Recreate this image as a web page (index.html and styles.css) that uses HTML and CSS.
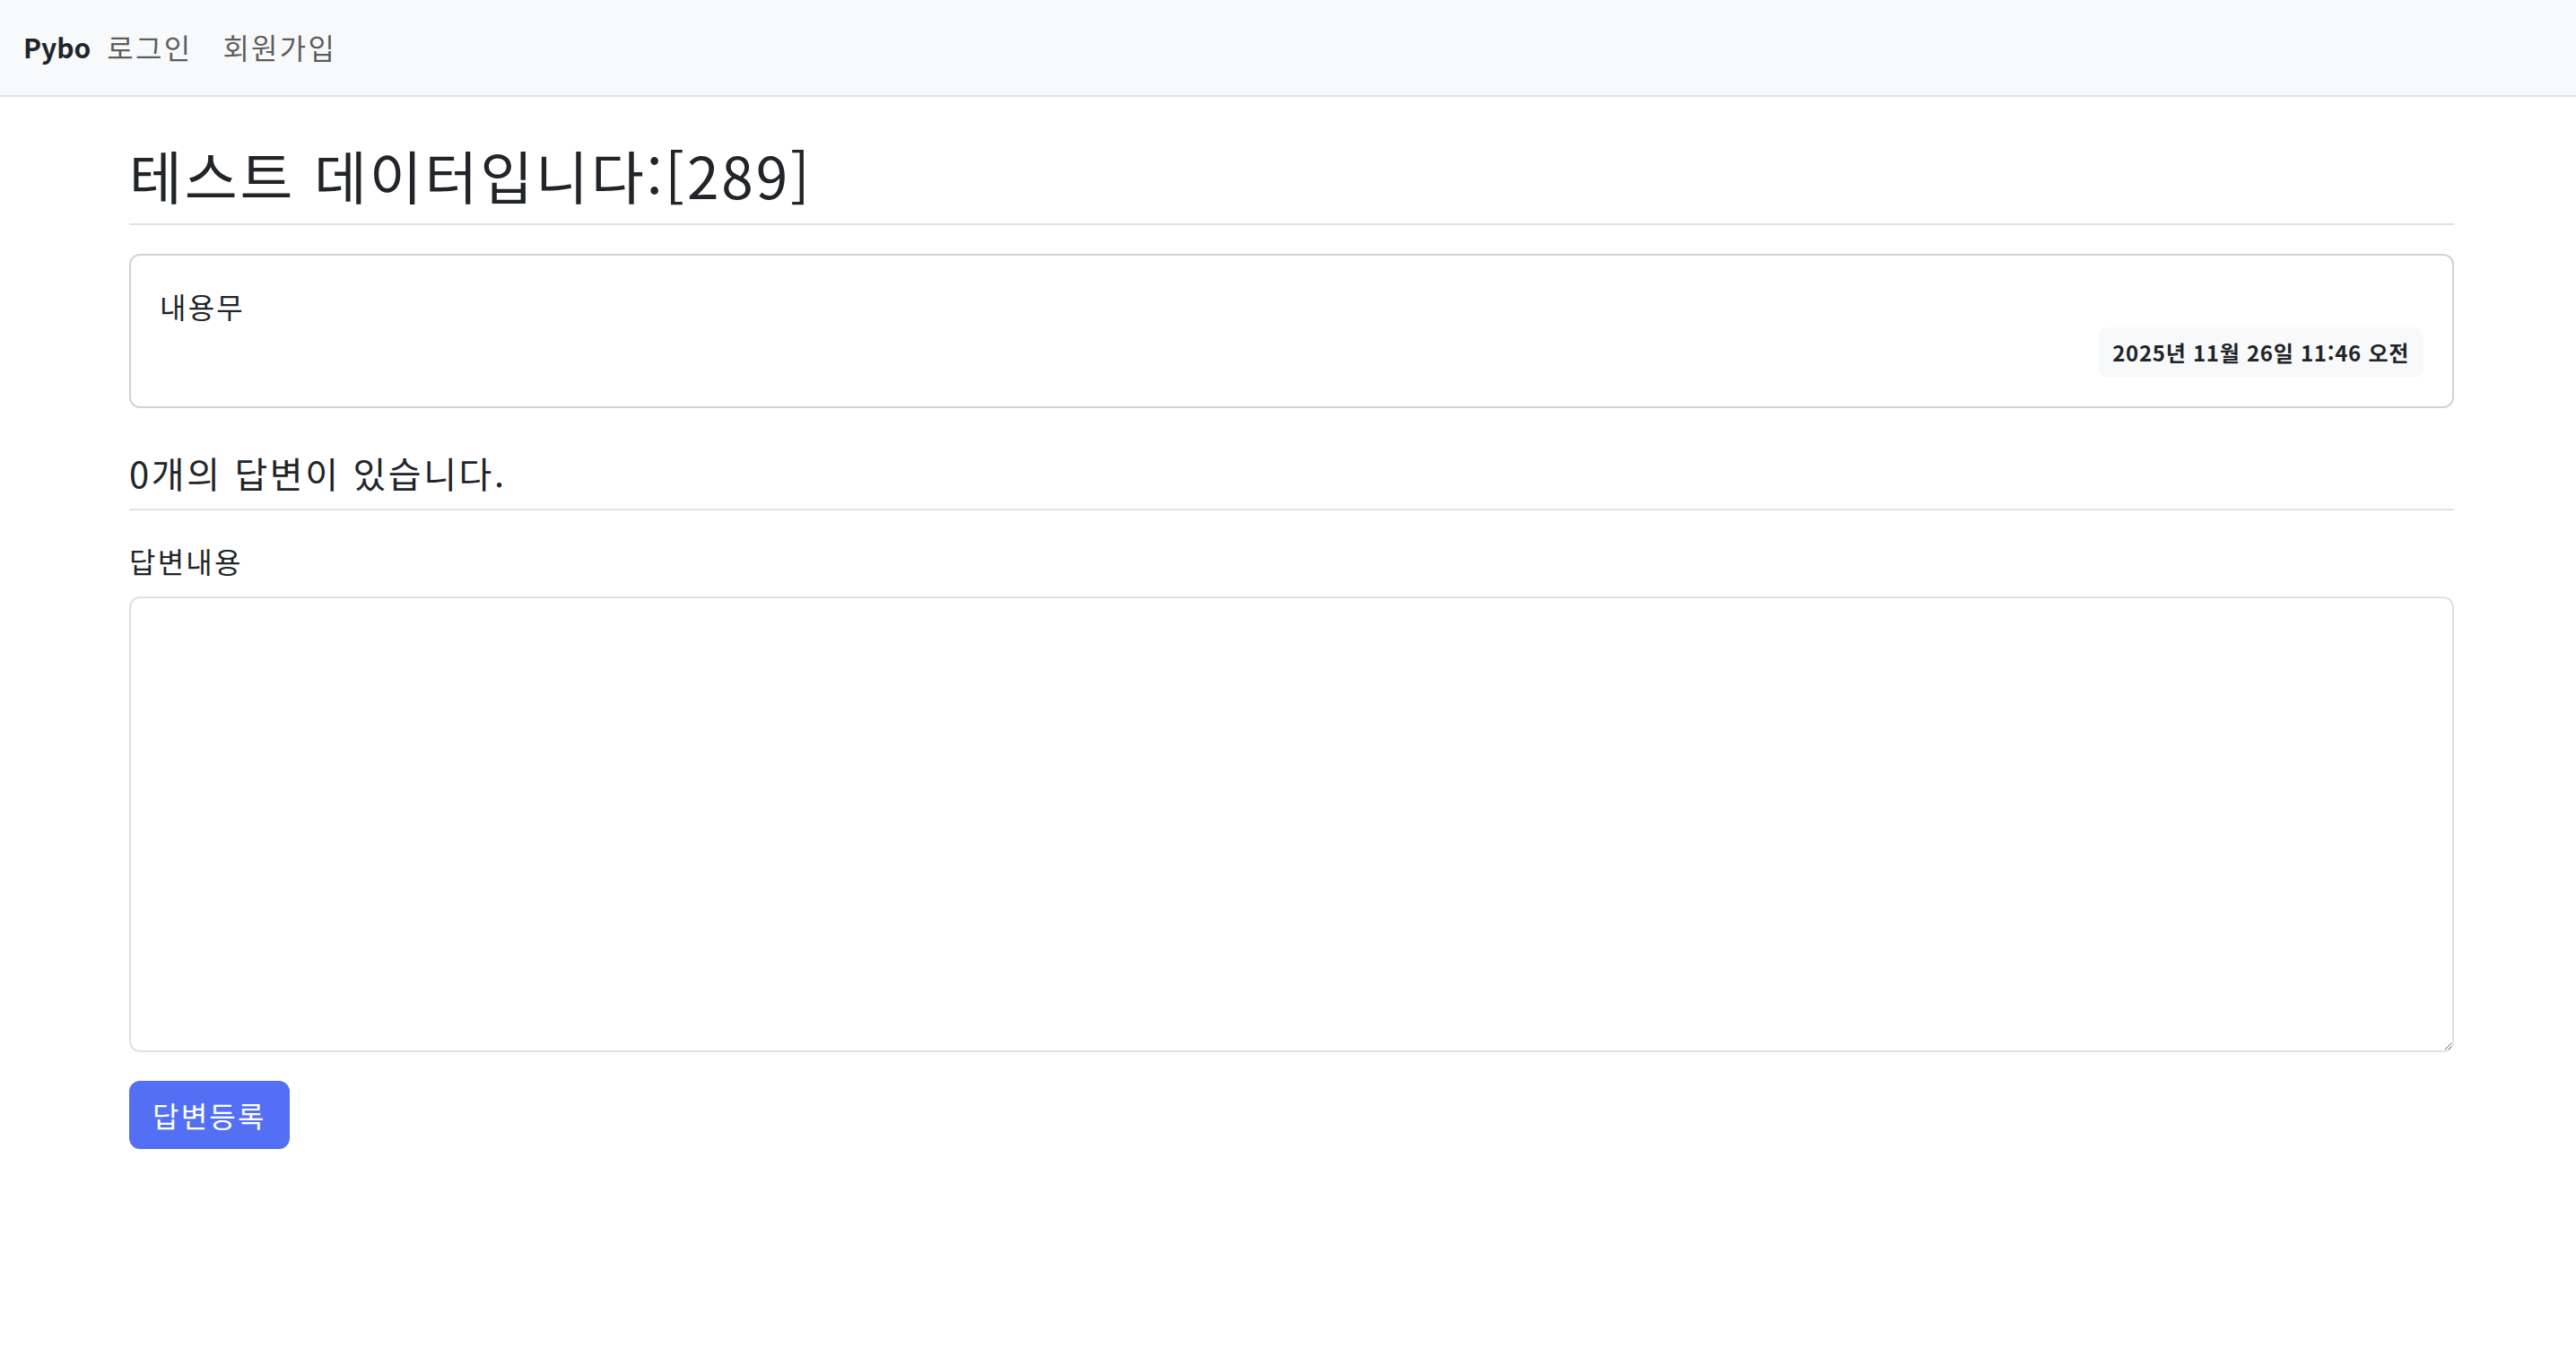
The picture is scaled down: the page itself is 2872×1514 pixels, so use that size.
FILE: index.html
```html
<!DOCTYPE html>
<html lang="ko">
  <head>
    <meta charset="UTF-8" />
    <meta name="viewport" content="width=device-width, initial-scale=1.0" />
    <title>Pybo</title>
    <link rel="stylesheet" href="styles.css">
  </head>
  <body>
    <nav class="navbar">
      <a class="brand" href="#">Pybo</a>
      <ul class="nav-links">
        <li><a href="#">로그인</a></li>
        <li><a href="#">회원가입</a></li>
      </ul>
    </nav>
    <div class="container">
      <h2 class="subject">테스트 데이터입니다:[289]</h2>
      <div class="card">
        <div class="card-text">내용무</div>
        <div class="card-meta">
          <span class="badge">2025년 11월 26일 11:46 오전</span>
        </div>
      </div>
      <h5 class="answer-count">0개의 답변이 있습니다.</h5>
      <form action="" method="post">
        <div class="field">
          <label for="content">답변내용</label>
          <textarea name="content" id="content" rows="10"></textarea>
        </div>
        <button type="submit" class="btn-primary">답변등록</button>
      </form>
    </div>
  </body>
</html>
```

FILE: styles.css
```css
* {
  box-sizing: border-box;
}
body {
  margin: 0;
  font-family: 'Noto Sans CJK KR', 'Noto Sans', sans-serif;
  font-size: 32px;
  line-height: 1.5;
  letter-spacing: 0.07em;
  color: #212529;
  background: #fff;
}
a {
  text-decoration: none;
}
.navbar {
  display: flex;
  align-items: center;
  height: 108px;
  padding: 0 26px 2px;
  background-color: #f8f9fa;
  border-bottom: 2px solid #dee2e6;
}
.brand {
  font-size: 30px;
  font-weight: 700;
  letter-spacing: 0;
  color: #212529;
  margin-right: 18px;
}
.nav-links {
  display: flex;
  gap: 34px;
  margin: 0;
  padding: 0;
  list-style: none;
}
.nav-links a {
  color: rgba(0, 0, 0, 0.65);
}
.container {
  width: 2592px;
  margin-left: 144px;
}
.subject {
  margin: 32px 0;
  padding: 16px 0;
  font-size: 64px;
  font-weight: 400;
  line-height: 1.2;
  letter-spacing: 0.045em;
  border-bottom: 2px solid #dee2e6;
}
.card {
  padding: 32px;
  border: 2px solid rgba(0, 0, 0, 0.175);
  border-radius: 12px;
}
.card-text {
  white-space: pre-line;
}
.card-meta {
  display: flex;
  justify-content: flex-end;
}
.badge {
  padding: 16px;
  font-size: 24px;
  font-weight: 700;
  line-height: 1;
  letter-spacing: 0.03em;
  background-color: #f8f9fa;
  border-radius: 12px;
}
.answer-count {
  margin: 32px 0;
  padding: 16px 0;
  font-size: 40px;
  font-weight: 400;
  line-height: 1.2;
  letter-spacing: 0.065em;
  border-bottom: 2px solid #dee2e6;
}
.field {
  margin-bottom: 32px;
}
.field label {
  display: block;
  margin-bottom: 16px;
}
.field textarea {
  display: block;
  width: 100%;
  padding: 12px 24px;
  font: inherit;
  color: #212529;
  border: 2px solid #dee2e6;
  border-radius: 12px;
}
.btn-primary {
  padding: 12px 24px;
  font: inherit;
  letter-spacing: 0.07em;
  color: #fff;
  background-color: #5370f4;
  border: 2px solid #5370f4;
  border-radius: 12px;
}
```
